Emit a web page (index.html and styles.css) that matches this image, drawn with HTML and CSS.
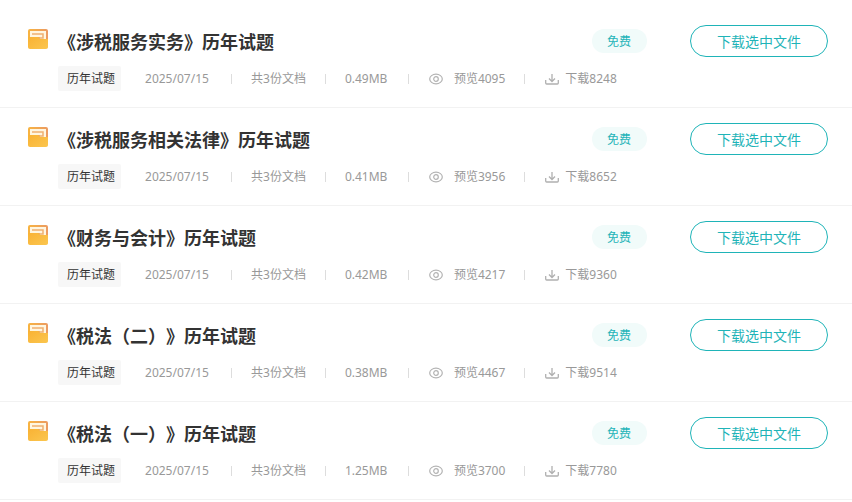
FILE: index.html
```html
<!DOCTYPE html>
<html lang="zh-CN">
<head>
  <meta charset="UTF-8" />
  <meta name="viewport" content="width=device-width, initial-scale=1" />
  <title>历年试题</title>
  <link rel="stylesheet" href="styles.css">
</head>
<body>
  <svg class="sprite" aria-hidden="true">
    <defs>
      <linearGradient id="front" x1="0" y1="0" x2="1" y2="1">
        <stop offset="0" stop-color="#f9b234" />
        <stop offset="1" stop-color="#fbc64f" />
      </linearGradient>
      <linearGradient id="back" x1="0" y1="0" x2="1" y2="0">
        <stop offset="0" stop-color="#f8b440" />
        <stop offset="1" stop-color="#eb9a62" />
      </linearGradient>
    </defs>
    <symbol id="folder" viewBox="0 0 20 20">
      <rect width="20" height="19" rx="2" fill="url(#back)" />
      <path d="M2 2h16v9h-6V8H2z" fill="#fff6e0" />
      <path d="M4 5h11v4h-4" fill="none" stroke="#f0b070" stroke-width="1.500" />
      <path d="M0 8h9.500q1 0 1.500 1t1.500 1H20v8a2 2 0 0 1-2 2H2a2 2 0 0 1-2-2z" fill="url(#front)" />
    </symbol>
    <symbol id="eye" viewBox="0 0 14 12">
      <g fill="none" stroke="#b3b3b3" stroke-width="1.200">
        <ellipse cx="7" cy="6" rx="6.300" ry="4.800" />
        <circle cx="7" cy="6" r="2.300" />
      </g>
    </symbol>
    <symbol id="down" viewBox="0 0 14 12">
      <path d="M7 1v7M4 5.500L7 8.500L10 5.500M.7 7v3q0 1 1 1h10.600q1 0 1-1V7" fill="none" stroke="#b0b0b0" stroke-width="1.300" />
    </symbol>
  </svg>

  <ul class="list" id="list"></ul>

  <script>
    const files = [
      ['《涉税服务实务》历年试题', '0.49MB', 4095, 8248],
      ['《涉税服务相关法律》历年试题', '0.41MB', 3956, 8652],
      ['《财务与会计》历年试题', '0.42MB', 4217, 9360],
      ['《税法（二）》历年试题', '0.38MB', 4467, 9514],
      ['《税法（一）》历年试题', '1.25MB', 3700, 7780]
    ];

    document.getElementById('list').innerHTML = files.map(([title, size, views, downloads]) => `
      <li class="item">
        <div class="head">
          <svg class="folder"><use href="#folder" /></svg>
          <h2 class="title">${title}</h2>
          <span class="free">免费</span>
          <button class="download" type="button">下载选中文件</button>
        </div>
        <div class="meta">
          <span class="tag">历年试题</span>
          <span class="info date">2025/07/15</span>
          <span class="info">共3份文档</span>
          <span class="info size">${size}</span>
          <span class="info views"><svg class="icon"><use href="#eye" /></svg>预览${views}</span>
          <span class="info count"><svg class="icon"><use href="#down" /></svg>下载${downloads}</span>
        </div>
      </li>`).join('');
  </script>
</body>
</html>
```
FILE: styles.css
```css
body {
  margin: 0;
  padding-top: 10px;
  background: #fff;
  color: #333;
  font-family: "Noto Sans", "Noto Sans CJK SC", sans-serif;
  font-size: 12px;
}

.sprite {
  position: absolute;
  width: 0;
  height: 0;
}

.list {
  margin: 0;
  padding: 0;
  list-style: none;
}

.item {
  padding: 15px 24px 16px 28px;
  border-bottom: 1px solid #f2f2f2;
}

.head {
  display: flex;
  align-items: center;
  height: 32px;
}

.folder {
  width: 20px;
  height: 20px;
  margin: 0 10px 4px 0;
}

.title {
  flex: 1;
  margin: 0;
  padding-top: 2px;
  font-size: 18px;
  line-height: 32px;
  text-spacing-trim: space-all;
}

.free {
  height: 24px;
  margin-right: 43px;
  padding: 0 16px 0 15px;
  border-radius: 12px;
  background: #f1fbfa;
  color: #1fb4b8;
  line-height: 26px;
}

.download {
  width: 138px;
  height: 32px;
  padding: 0;
  border: 1px solid #1fb4b8;
  border-radius: 16px;
  background: #fff;
  color: #1fb4b8;
  font-family: inherit;
  font-size: 14px;
  cursor: pointer;
}

.meta {
  display: flex;
  align-items: center;
  margin-top: 9px;
  padding-left: 30px;
  color: #999;
}

.tag {
  margin-right: 24px;
  padding: 0 6px 0 9px;
  border-radius: 2px;
  background: #f7f7f7;
  color: #333;
  line-height: 25px;
}

.info {
  display: flex;
  align-items: center;
  line-height: 25px;
}

.info + .info::before {
  content: "";
  width: 1px;
  height: 10px;
  margin: 0 19px;
  background: #ddd;
}

.date {
  min-width: 67px;
}

.size {
  min-width: 83px;
}

.icon {
  width: 14px;
  height: 12px;
}

.views .icon {
  margin: 0 11px 0 1px;
}

.count .icon {
  margin: 0 6px 0 1px;
}
```
